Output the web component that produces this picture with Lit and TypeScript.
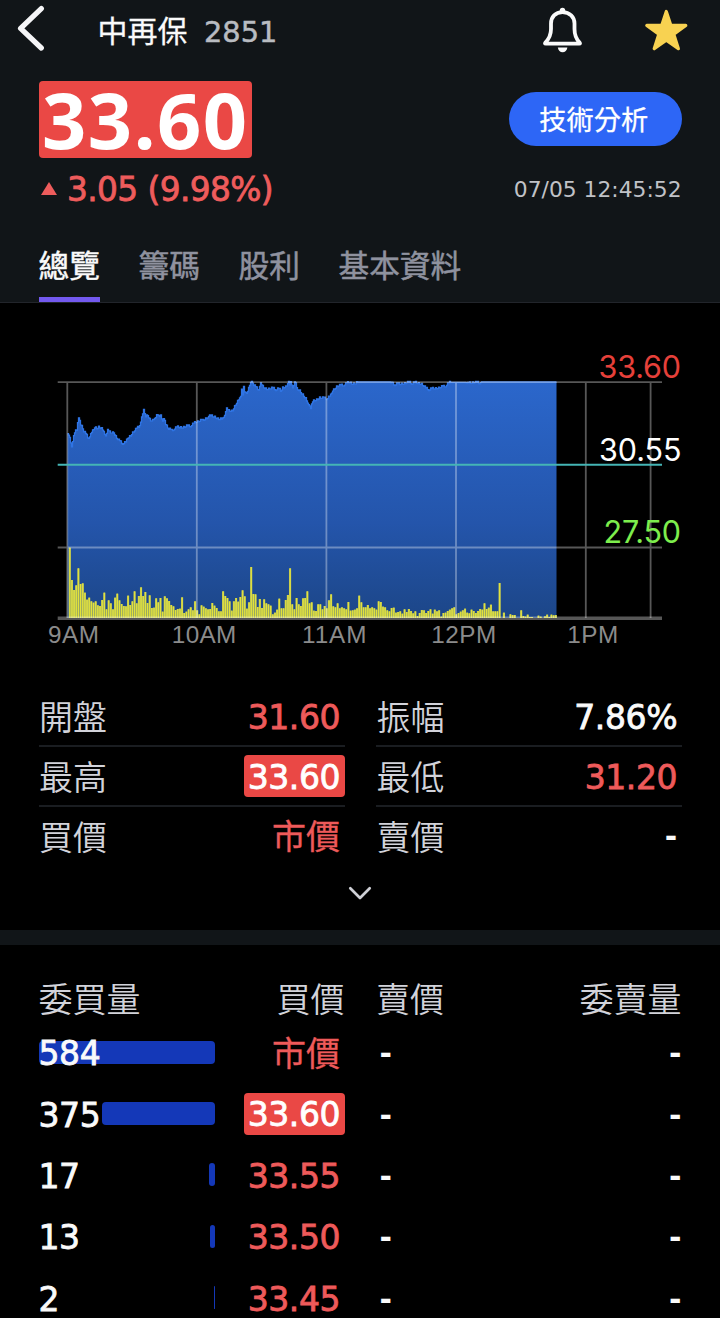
import { LitElement, html, svg, css, nothing } from "lit";
import { customElement, property } from "lit/decorators.js";
import { classMap } from "lit/directives/class-map.js";
import { styleMap } from "lit/directives/style-map.js";

/* Price curve as x,y pairs in chart coordinates. */
const PRICE: number[] = [
  67.3, 95.7, 69.3, 96.7, 70.7, 101.7, 72, 106, 73.3, 100, 75.3, 93.3, 77.3, 90.7, 78.3, 80, 79.7, 79, 80.7, 85, 82.7, 88.3,
  84, 92.7, 86, 95, 88.3, 98, 90.7, 96, 93.3, 91.7, 95.3, 88, 97.3, 89.3, 99.3, 87.7, 102, 90, 104, 93.3, 106, 95, 108, 91.3,
  110.7, 94, 114, 93.3, 116, 97.3, 118.7, 101.3, 122, 103.3, 126, 103.7, 128, 99.3, 130.7, 96.7, 133.3, 93.3, 136.7, 90,
  139.3, 86.7, 141.7, 80, 144, 71.7, 146, 77.3, 148, 76, 150.7, 81.7, 153.3, 81.7, 155.3, 80, 157.3, 72.7, 159.3, 78.3,
  161.3, 77.3, 162.7, 82, 164.7, 79.3, 166, 85, 168.7, 90, 172, 91.3, 174, 89.3, 177.3, 88.3, 183.3, 88.3, 189.3, 86.7,
  193.3, 85, 196.7, 83, 200.7, 81.3, 202.7, 79.3, 204, 82.7, 206.7, 78.7, 208.7, 76, 210.7, 77.3, 214.7, 77.7, 218.7, 80,
  222.7, 80.7, 224.7, 75.3, 226.7, 69.3, 228.7, 72, 232.7, 71.7, 235.3, 66.7, 238, 62.7, 240.7, 58.7, 242, 48.3, 243, 55,
  244, 48.3, 245.3, 55, 247.3, 54, 249.3, 48.3, 251, 42.3, 252.3, 41.3, 253.7, 46, 256.7, 48.7, 258.7, 50, 260.7, 44.3,
  263.3, 48.3, 267.3, 50, 273.3, 49.3, 279.3, 50, 281.3, 52.5, 282.7, 48.7, 286.7, 47.3, 288.7, 42.7, 290, 46.7, 291.3, 42.7,
  292.7, 47.3, 294.3, 45, 295.7, 42.7, 297, 50, 300, 51.7, 303.3, 56, 306, 60, 308, 65, 309.7, 64, 311, 68.3, 313.3, 62.7,
  316.7, 60.7, 320, 58.7, 323.3, 59.3, 327.3, 58.7, 330.7, 57.3, 332.7, 52, 334.7, 50, 337.3, 47.3, 340, 46.7, 344, 45.3,
  347.3, 44.3, 350, 43.3, 352.7, 44.7, 356.7, 44.7, 358, 42, 390, 42, 393.3, 44.5, 400, 45.3, 406.7, 44, 410, 43.3, 416.7, 44,
  421.7, 44.7, 426, 49.3, 431.7, 50, 440, 48.7, 444, 47.3, 447.3, 45, 453.3, 42.5, 465, 42.5, 470, 43.7, 480, 43.3, 482, 42,
  556.5, 42,
];

/* Traded volume for each minute from 9:01, as bar heights in thirds of a pixel. */
const VOLUME: number[] = [
  211, 114, 84, 98, 149, 102, 104, 76, 55, 61, 50, 46, 50, 38, 36, 54, 76, 26, 53, 44, 26, 61, 73, 53, 42, 36, 35, 67, 39, 50,
  80, 44, 66, 92, 66, 78, 45, 68, 30, 31, 59, 47, 60, 19, 65, 59, 51, 39, 35, 24, 27, 28, 62, 15, 19, 26, 32, 23, 50, 23,
  11, 38, 34, 29, 26, 27, 45, 37, 30, 20, 20, 80, 66, 60, 50, 22, 50, 60, 49, 63, 83, 65, 28, 47, 153, 72, 71, 33, 57, 30,
  56, 44, 41, 37, 11, 16, 25, 58, 29, 29, 54, 69, 149, 41, 26, 60, 41, 36, 59, 60, 80, 44, 47, 22, 21, 41, 41, 26, 36, 29,
  53, 71, 35, 32, 44, 29, 32, 29, 26, 48, 22, 23, 25, 29, 67, 47, 32, 32, 39, 29, 32, 29, 25, 50, 48, 34, 32, 23, 20, 30,
  31, 16, 18, 20, 13, 26, 18, 27, 21, 14, 20, 6, 15, 24, 23, 15, 21, 26, 13, 25, 20, 23, 4, 15, 16, 21, 25, 29, 32, 11,
  15, 19, 23, 28, 16, 14, 25, 21, 15, 21, 27, 25, 44, 27, 31, 40, 20, 20, 20, 105, 0, 16, 0, 0, 11, 9, 9, 0, 0, 23,
  6, 4, 10, 3, 3, 0, 0, 7, 4, 0, 5, 10, 3, 10, 8, 9,
];

function tickPath(): string {
  let d = "";
  let k = 0;
  for (let x = 68; x <= 556; x += 1) {
    while (k < PRICE.length - 4 && PRICE[k + 2] < x) k += 2;
    const t = (x - PRICE[k]) / (PRICE[k + 2] - PRICE[k]);
    let y = PRICE[k + 1] + t * (PRICE[k + 3] - PRICE[k + 1]);
    if (y > 43) y += (((x * x * 31 + x * 7) % 17) / 17 - 0.6) * 4;
    d += `${d ? "L" : "M"}${x - 0.5} ${Math.max(y, 41.4).toFixed(1)}H${x + 0.5}`;
  }
  return d;
}

@customElement("price-chart")
export class PriceChart extends LitElement {
  static styles = css`
    :host { display: block; height: 350px; }
    svg { display: block; }
    .grid { stroke: #fff; stroke-opacity: 0.34; stroke-width: 1.8; fill: none; }
    .base { stroke: #fff; stroke-opacity: 0.34; stroke-width: 3.6; }
    .ref { stroke: #44b5b5; stroke-width: 2; }
    .edge { fill: none; stroke: #2f74e4; stroke-width: 1.3; }
    .vol { fill: #b3bd5c; }
    .tick { fill: #e2e23c; }
    .hour { font: 24.3px "Liberation Sans", Arial, sans-serif; fill: #8b8b8b; }
    .price { font: 30.5px Inter, sans-serif; text-anchor: end; }
    .up { fill: #e6403a; }
    .flat { fill: #fff; }
    .down { fill: #7dee4d; }
  `;

  render() {
    const line = tickPath();
    const hours: [string, number, number][] = [
      ["9AM", 48, 51], ["10AM", 171.8, 64.5], ["11AM", 302, 64.5], ["12PM", 431.3, 65], ["1PM", 567.3, 51],
    ];
    return html`<svg width="720" height="350" viewBox="0 -37 720 350">
      <defs>
        <linearGradient id="area" gradientUnits="userSpaceOnUse" x1="0" y1="40" x2="0" y2="278">
          <stop offset="0" stop-color="#2b67cc"></stop>
          <stop offset="0.6" stop-color="#2455ab"></stop>
          <stop offset="1" stop-color="#1c4688"></stop>
        </linearGradient>
      </defs>
      <path fill="url(#area)" d="${line}V278H67.5Z"></path>
      <path class="edge" d=${line}></path>
      ${VOLUME.map((v, i) => {
        const x = 67.3 + 2.16 * (i + 1);
        return v
          ? svg`<rect class="vol" x=${x - 0.8} y=${278 - v / 3} width="2.16" height=${v / 3}></rect>
              <rect class="tick" x=${x - 0.3} y=${278 - v / 3} width="1.3" height=${v / 3}></rect>`
          : nothing;
      })}
      <path class="grid" d="M57.7 42.2H662M57.7 207.5H662M67.3 42V278M196.8 42V278M326.4 42V278M456 42V278M585.8 42V278M650.6 42V278"></path>
      <path class="base" d="M57.7 278.2H662"></path>
      <path class="ref" d="M57.7 124.7H662"></path>
      ${hours.map(([t, x, w]) => svg`<text class="hour" x=${x} y="303" textLength=${w}>${t}</text>`)}
      <text class="price up" x="681" y="37.6" textLength="82.5">33.60</text>
      <text class="price flat" x="681.5" y="120.8" textLength="82.5">30.55</text>
      <text class="price down" x="681" y="203.3" textLength="77.5">27.50</text>
    </svg>`;
  }
}

@customElement("stat-cell")
export class StatCell extends LitElement {
  @property() label = "";
  @property() value = "";
  @property() tone = "";
  static styles = css`
    :host {
      display: flex; justify-content: space-between; align-items: center; box-sizing: border-box;
      height: 59.7px; border-bottom: 2px solid #1a1d21;
    }
    :host([last]) { border-bottom-color: transparent; }
    .label { font: 34px/42px "Noto Sans CJK TC", sans-serif; font-weight: 350; color: #d2d3da; padding-left: 0.5px; }
    .value {
      font: 33px/38px "DejaVu Sans", sans-serif; letter-spacing: -0.4px; -webkit-text-stroke: 0.8px currentColor; color: #fafafa;
      padding: 4px 4.4px 0 3.4px; border-radius: 4px;
    }
    .up { color: #ee5a5a; }
    .limit { background: #ea4845; color: #fff; }
    .cjk { font: 34px/40px "Noto Sans CJK TC", sans-serif; letter-spacing: 0; -webkit-text-stroke: 0.3px currentColor; padding-top: 0; margin-top: -2px; }
    .dash { font: 700 30px/36px "DejaVu Sans", sans-serif; letter-spacing: 0; -webkit-text-stroke: 0; padding-top: 3px; }
  `;
  render() {
    const cls = {
      value: true,
      up: this.tone === "up" || this.tone === "market",
      limit: this.tone === "limit",
      cjk: this.tone === "market",
      dash: this.value === "-",
    };
    return html`<span class="label">${this.label}</span><span class=${classMap(cls)}>${this.value}</span>`;
  }
}

@customElement("app-root")
export class AppRoot extends LitElement {
  static styles = css`
    :host {
      display: block; width: 720px; height: 1318px; overflow: hidden; background: #000; color: #fafafa;
      font-family: "DejaVu Sans", sans-serif; white-space: nowrap;
    }
    .head { box-sizing: border-box; height: 303px; background: #111518; border-bottom: 1.5px solid #22252b; display: flex; flex-direction: column; }
    .bar { height: 62px; display: flex; align-items: center; padding: 0 31px 0 16px; }
    .bar svg { display: block; flex: none; }
    .name { font: 30px/44px "Noto Sans CJK TC", sans-serif; -webkit-text-stroke: 0.3px currentColor; margin-left: 50.5px; margin-top: -4px; }
    .code { font-size: 28.8px; line-height: 44px; -webkit-text-stroke: 0.5px currentColor; color: #b9bcc1; margin-left: 16.5px; margin-top: 2px; flex: 1; }
    .star { margin-left: 60px; }
    .quote { display: flex; justify-content: space-between; padding: 18.5px 38.5px 0; height: 165px; box-sizing: border-box; }
    .left { display: flex; flex-direction: column; align-items: flex-start; }
    .last { font: 700 77.5px/76px "Noto Sans", sans-serif; width: 213.5px; height: 77px; box-sizing: border-box; background: #ea4845; color: #fff; border-radius: 4px; padding-left: 3.5px; letter-spacing: 1.5px; }
    .change { display: flex; align-items: center; font-size: 32.8px; line-height: 44px; -webkit-text-stroke: 0.8px currentColor; letter-spacing: -0.6px; color: #ee5c5c; margin-top: 10.5px; }
    .tri { width: 0; height: 0; border: 8.7px solid transparent; border-top: 0; border-bottom: 13px solid #ee5c5c; margin: 0 10px 3px 2.5px; }
    .right { display: flex; flex-direction: column; align-items: flex-end; padding-top: 11.5px; }
    .btn { width: 172.5px; height: 54px; border: 0; padding: 0 3px 3px 0; border-radius: 27px; background: #2d66f6; color: #fff; font: 27.2px/40px "Noto Sans CJK TC", sans-serif; -webkit-text-stroke: 0.3px currentColor; }
    .time { font-size: 21.8px; line-height: 32px; color: #c0c2c7; margin-top: 28px; }
    .tabs { display: flex; gap: 38.6px; padding-left: 38.5px; flex: 1; }
    .tab { font: 30.7px/44px "Noto Sans CJK TC", sans-serif; -webkit-text-stroke: 0.5px currentColor; color: #8f929f; padding-top: 15.5px; height: 70.5px; box-sizing: border-box; }
    .on { color: #fafafa; height: 76px; border-bottom: 5.5px solid #7359ee; }
    .stats { display: grid; grid-template-columns: 306px 305.5px; column-gap: 31.5px; padding: 0 38.5px; height: 242px; box-sizing: border-box; align-content: start; margin-top: 34.5px; }
    .more { grid-column: 1 / -1; justify-self: center; margin-top: 17.5px; display: block; }
    .gap { height: 15.5px; background: #111518; }
    .book { display: grid; grid-template-columns: 176px 130px 152px 185px; grid-template-rows: 77px repeat(5, 61.4px); padding: 0 38.5px; align-items: center; }
    .th { font: 34px/44px "Noto Sans CJK TC", sans-serif; font-weight: 350; color: #d2d3da; padding-top: 28px; }
    .r { text-align: right; justify-self: end; }
    .sell { padding-left: 31.5px; }
    .qty { display: grid; align-items: center; font-size: 33px; letter-spacing: -0.4px; line-height: 38px; -webkit-text-stroke: 0.8px currentColor; padding-top: 3px; }
    .qty > * { grid-area: 1 / 1; }
    .depth { height: 23px; border-radius: 4px; background: #1438b8; justify-self: end; margin-top: -4px; }
    .px { font-size: 33px; letter-spacing: -0.4px; line-height: 38px; -webkit-text-stroke: 0.8px currentColor; color: #ee5a5a; padding: 3px 4.4px 0 3.4px; border-radius: 4px; }
    .limit { background: #ea4845; color: #fff; padding: 3px 4.4px 1px 3.4px; }
    .market { font: 34px/40px "Noto Sans CJK TC", sans-serif; letter-spacing: 0; -webkit-text-stroke: 0.3px currentColor; padding-top: 0; margin-top: -1px; }
    .dash { font-weight: 700; font-size: 30px; line-height: 36px; padding-top: 3px; }
    .dash.sell { padding-left: 34.9px; }
  `;

  render() {
    const book: [string, number, string, string][] = [
      ["584", 176, "市價", "market"],
      ["375", 113, "33.60", "limit"],
      ["17", 5.2, "33.55", ""],
      ["13", 4.2, "33.50", ""],
      ["2", 0.7, "33.45", ""],
    ];
    return html`
      <header class="head">
        <div class="bar">
          <svg width="31" height="62" viewBox="16 0 31 62" fill="none" stroke="#f5f5f7" stroke-width="5.3" stroke-linecap="round" stroke-linejoin="round">
            <path d="M41.3 8.6L20.6 28.3L41.3 48"></path>
          </svg>
          <span class="name">中再保</span>
          <span class="code">2851</span>
          <svg width="42" height="62" viewBox="541 0 42 62">
            <circle cx="562.5" cy="10.5" r="2.7" fill="#fafafa"></circle>
            <path d="M557.8 47.4H567.4C567 50.3 565 52.3 562.6 52.3S558.2 50.3 557.8 47.4Z" fill="#fafafa"></path>
            <path d="M562.5 12.1C555.3 12.1 551 17 551 23.5V29C551 35 549.4 38.6 545.3 42.6Q544.4 43.7 545.8 43.7H579.2Q580.6 43.7 579.7 42.6C575.6 38.6 574.5 35 574.5 29V23.5C574.5 17 569.7 12.1 562.5 12.1Z" fill="none" stroke="#fafafa" stroke-width="3.8" stroke-linejoin="round"></path>
          </svg>
          <svg class="star" width="46" height="62" viewBox="643 0 46 62">
            <path d="M666.3 11.5L670.9 25.4H685.8L673.8 34.3L678.4 48.7L666.3 40.2L654.2 48.7L658.8 34.3L646.8 25.4H661.7Z" fill="#f8d251" stroke="#f8d251" stroke-width="3.2" stroke-linejoin="round"></path>
          </svg>
        </div>
        <section class="quote">
          <div class="left">
            <div class="last">33.60</div>
            <div class="change"><i class="tri"></i>3.05 (9.98%)</div>
          </div>
          <div class="right">
            <button class="btn">技術分析</button>
            <div class="time">07/05 12:45:52</div>
          </div>
        </section>
        <nav class="tabs">
          <span class="tab on">總覽</span><span class="tab">籌碼</span><span class="tab">股利</span><span class="tab">基本資料</span>
        </nav>
      </header>
      <price-chart></price-chart>
      <section class="stats">
        <stat-cell label="開盤" value="31.60" tone="up"></stat-cell>
        <stat-cell label="振幅" value="7.86%"></stat-cell>
        <stat-cell label="最高" value="33.60" tone="limit"></stat-cell>
        <stat-cell label="最低" value="31.20" tone="up"></stat-cell>
        <stat-cell label="買價" value="市價" tone="market" last></stat-cell>
        <stat-cell label="賣價" value="-" last></stat-cell>
        <svg class="more" width="24" height="20" viewBox="0 0 24 20" fill="none" stroke="#cfd0d6" stroke-width="2.7" stroke-linecap="round" stroke-linejoin="round">
          <path d="M2.3 4.3L12 14L21.7 4.3"></path>
        </svg>
      </section>
      <div class="gap"></div>
      <section class="book">
        <span class="th">委買量</span><span class="th r">買價</span><span class="th sell">賣價</span><span class="th r">委賣量</span>
        ${book.map(
          ([qty, width, price, tone]) => html`
            <div class="qty"><i class="depth" style=${styleMap({ width: `${width}px` })}></i><span>${qty}</span></div>
            <span class="px r ${tone}">${price}</span>
            <span class="dash sell">-</span>
            <span class="dash r">-</span>
          `,
        )}
      </section>
    `;
  }
}
